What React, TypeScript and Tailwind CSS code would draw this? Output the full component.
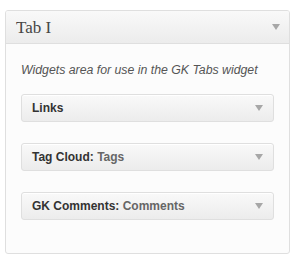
import React from "react";

function Arrow() {
  return (
    <svg width="8" height="6" viewBox="0 0 8 6" className="shrink-0">
      <path d="M0 0 H8 L4 6 Z" fill="#a7a7a7" />
    </svg>
  );
}

function WidgetBox({ title, sub }: { title: string; sub?: string }) {
  return (
    <div className="h-[28px] border border-[#dfdfdf] rounded-[3px] bg-gradient-to-b from-[#f9f9f9] to-[#ececec] shadow-[inset_0_1px_0_#fff] flex items-center justify-between pl-[10px] pr-[10px]">
      <div className="text-[12px] font-bold leading-none text-[#333] font-['Liberation_Sans',Arial,sans-serif]">
        {title}
        {sub && (
          <>
            :<span className="text-[#666]"> {sub}</span>
          </>
        )}
      </div>
      <Arrow />
    </div>
  );
}

export default function App() {
  return (
    <div className="w-[299px] h-[260px] bg-white pt-[10px] pl-[5px]">
      <div className="w-[285px] h-[244px] border border-[#dfdfdf] rounded-[3px] bg-[#fcfcfc] overflow-hidden">
        <div className="h-[33px] border-b border-[#dfdfdf] bg-gradient-to-b from-[#f9f9f9] to-[#ececec] flex items-center justify-between pl-[10px] pr-[9px]">
          <span className="text-[17px] leading-none text-[#464646] font-['Liberation_Serif','Times_New_Roman',serif]">
            Tab I
          </span>
          <Arrow />
        </div>
        <div className="px-[15px]">
          <p className="pt-[18px] text-[12.3px] leading-[16px] italic text-[#555] font-['Liberation_Sans',Arial,sans-serif]">
            Widgets area for use in the GK Tabs widget
          </p>
          <div className="mt-[16px] flex flex-col gap-[21px]">
            <WidgetBox title="Links" />
            <WidgetBox title="Tag Cloud" sub="Tags" />
            <WidgetBox title="GK Comments" sub="Comments" />
          </div>
        </div>
      </div>
    </div>
  );
}
